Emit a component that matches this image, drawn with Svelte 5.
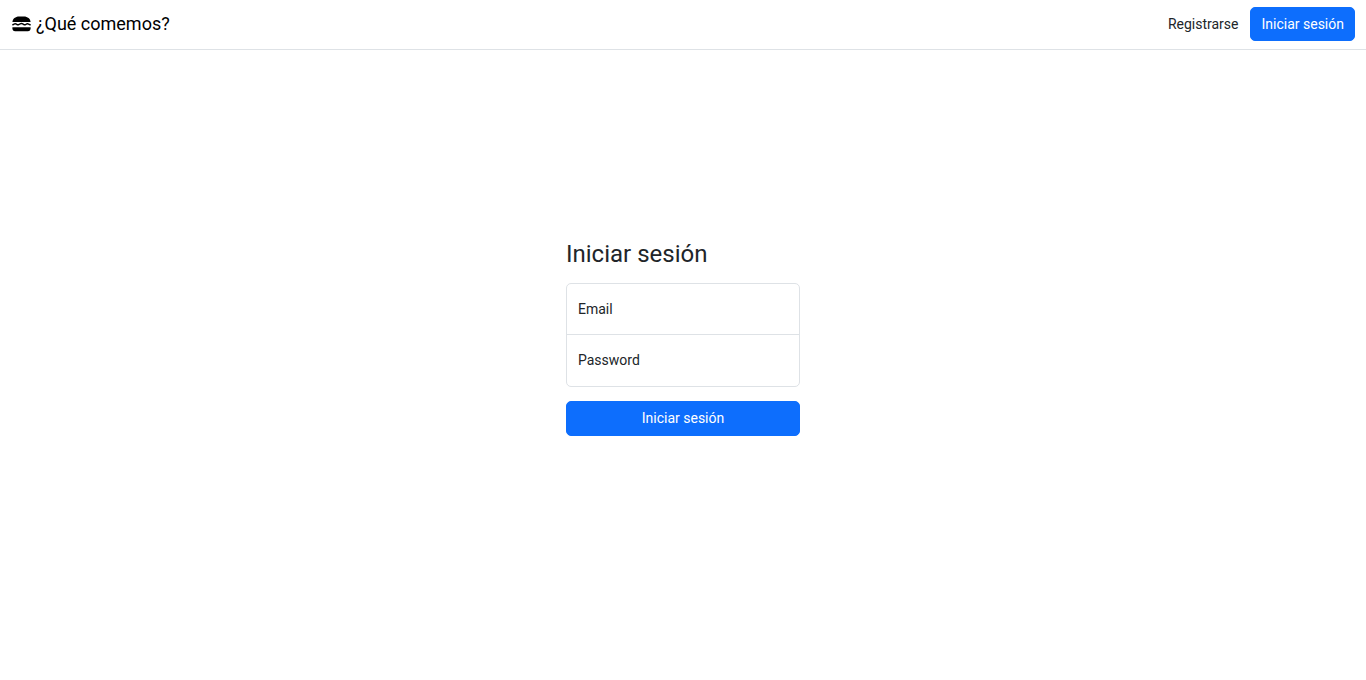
<script>
  let email = $state('');
  let password = $state('');
</script>

<div class="page">
  <header>
    <a class="brand" href="#inicio">
      <svg viewBox="0 0 19 16" aria-hidden="true">
        <path d="M.4 6C.6 2.600 3.500.4 7 .4h5c3.500 0 6.400 2.200 6.600 5.600z" />
        <path d="M.4 9 2 8.200q1.200-.7 2.400 0l.7.400q.8.500 1.600 0l1.400-.7q1.300-.7 2.600 0l1.200.7q.8.500 1.600 0l.8-.4q1.200-.7 2.300 0l2 .8" fill="none" stroke="currentColor" stroke-width="1.500" />
        <path d="M.4 11.300h18.200v1.200c0 1.600-1.100 2.700-2.700 2.700H3.100c-1.600 0-2.700-1.100-2.700-2.700z" />
      </svg>
      <span>¿Qué comemos?</span>
    </a>
    <nav>
      <a class="register" href="#registrarse">Registrarse</a>
      <a class="button" href="#sesion">Iniciar sesión</a>
    </nav>
  </header>

  <main>
    <form onsubmit={(event) => event.preventDefault()}>
      <h1>Iniciar sesión</h1>
      <div class="fields">
        <div class="field" class:filled={email}>
          <input id="email" type="email" autocomplete="email" bind:value={email} />
          <label for="email">Email</label>
        </div>
        <div class="field" class:filled={password}>
          <input id="password" type="password" autocomplete="current-password" bind:value={password} />
          <label for="password">Password</label>
        </div>
      </div>
      <button class="button submit" type="submit">Iniciar sesión</button>
    </form>
  </main>
</div>

<style>
  :global(body) {
    margin: 0;
    background: #fff;
  }

  .page {
    display: flex;
    flex-direction: column;
    min-height: 100vh;
    color: #212529;
    font-family: "Google Sans", "Product Sans", Roboto, sans-serif;
    font-size: 14px;
    line-height: 20px;
  }

  header {
    display: flex;
    align-items: center;
    justify-content: space-between;
    padding: 7px 11px 8px 12px;
    border-bottom: 1px solid #dee2e6;
  }

  a {
    color: inherit;
    text-decoration: none;
  }

  .brand {
    display: flex;
    align-items: center;
    gap: 5px;
    color: #000;
    font-size: 18px;
  }

  .brand svg {
    width: 19px;
    height: 16px;
    fill: currentColor;
  }

  nav {
    display: flex;
    align-items: center;
    gap: 12px;
  }

  .button {
    padding: 6px 10px;
    border: 1px solid #0d6efd;
    border-radius: 5px;
    background: #0d6efd;
    color: #fff;
    font: inherit;
    text-align: center;
    cursor: pointer;
  }

  .submit {
    min-height: 35px;
  }

  main {
    display: flex;
    flex: 1;
    align-items: center;
    justify-content: center;
    padding: 0 11px 56px;
  }

  form {
    display: flex;
    flex-direction: column;
    width: 100%;
    max-width: 234px;
  }

  h1 {
    margin: 0 0 14px;
    font-size: 24px;
    font-weight: 400;
    line-height: 30px;
  }

  .fields {
    display: grid;
    grid-template-rows: 50px 52px;
    margin-bottom: 14px;
    border: 1px solid #dee2e6;
    border-radius: 5px;
  }

  .field {
    display: grid;
    align-items: center;
  }

  .field + .field {
    border-top: 1px solid #dee2e6;
  }

  .field input,
  .field label {
    grid-area: 1 / 1;
  }

  .field input {
    box-sizing: border-box;
    width: 100%;
    height: 100%;
    padding: 16px 11px 0;
    border: 0;
    border-radius: 5px;
    background: transparent;
    color: inherit;
    font: inherit;
  }

  .field label {
    padding: 0 11px;
    pointer-events: none;
  }

  .field input:focus + label,
  .filled label {
    align-self: start;
    font-size: 12px;
  }
</style>
